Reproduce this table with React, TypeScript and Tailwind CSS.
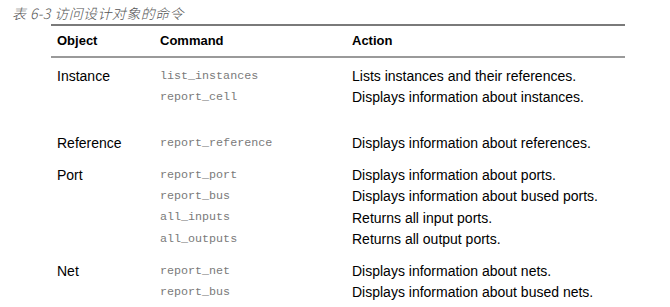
const sans = { fontFamily: '"Liberation Sans", Arial, sans-serif' }

type Group = { object: string; rows: { cmd: string; action: string }[]; gap: string }

const groups: Group[] = [
  {
    object: 'Instance',
    gap: 'mt-[8px]',
    rows: [
      { cmd: 'list_instances', action: 'Lists instances and their references.' },
      { cmd: 'report_cell', action: 'Displays information about instances.' },
    ],
  },
  {
    object: 'Reference',
    gap: 'mt-[24.4px]',
    rows: [{ cmd: 'report_reference', action: 'Displays information about references.' }],
  },
  {
    object: 'Port',
    gap: 'mt-[10.7px]',
    rows: [
      { cmd: 'report_port', action: 'Displays information about ports.' },
      { cmd: 'report_bus', action: 'Displays information about bused ports.' },
      { cmd: 'all_inputs', action: 'Returns all input ports.' },
      { cmd: 'all_outputs', action: 'Returns all output ports.' },
    ],
  },
  {
    object: 'Net',
    gap: 'mt-[10.7px]',
    rows: [
      { cmd: 'report_net', action: 'Displays information about nets.' },
      { cmd: 'report_bus', action: 'Displays information about bused nets.' },
    ],
  },
]

export default function App() {
  return (
    <div className="w-[670px] h-[307px] bg-white overflow-hidden">
      {/* Caption */}
      <div
        className="h-[24px] pl-[12px] pt-[4px] text-[14px] leading-[18px] italic font-light text-[#555] whitespace-pre tracking-[0.4px]"
        style={{ fontFamily: '"Noto Sans CJK SC", sans-serif' }}
      >
        表 6-3 访问设计对象的命令
      </div>

      <div className="ml-[51px] w-[574px]" style={sans}>
        <div className="h-[2px] bg-[#7a7a7a]" />
        {/* Header */}
        <div className="flex h-[30px] items-center pl-[6px] text-[13px] font-bold text-black">
          <div className="w-[103px]">Object</div>
          <div className="w-[192px]">Command</div>
          <div>Action</div>
        </div>
        <div className="h-[2px] bg-[#9a9a9a]" />

        {/* Body */}
        {groups.map((g) => (
          <div key={g.object} className={`flex pl-[6px] ${g.gap}`}>
            <div className="w-[103px] h-[21.3px] flex items-center text-[14px] text-black">{g.object}</div>
            <div className="flex flex-col">
              {g.rows.map((r, i) => (
                <div key={i} className="flex h-[21.3px] items-center">
                  <div
                    className="w-[192px] text-[11.7px] text-[#7a7a7a]"
                    style={{ fontFamily: '"Liberation Mono", "Courier New", monospace' }}
                  >
                    {r.cmd}
                  </div>
                  <div className="text-[14px] text-black">{r.action}</div>
                </div>
              ))}
            </div>
          </div>
        ))}
      </div>
    </div>
  )
}
